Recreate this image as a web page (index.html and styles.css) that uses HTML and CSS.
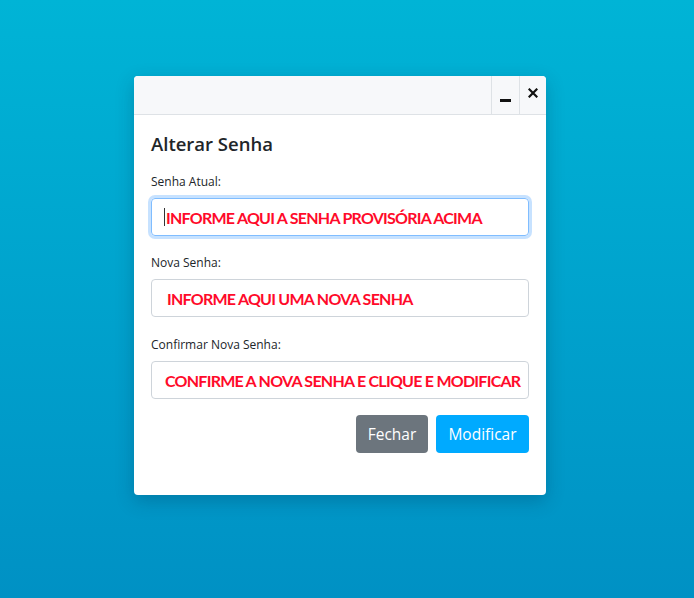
FILE: index.html
```html
<!DOCTYPE html>
<html lang="pt">
<head>
<meta charset="utf-8">
<link rel="stylesheet" href="styles.css">
</head>
<body>
<div class="dialog">
  <div class="dialog-header">
    <button class="hbtn" aria-label="minimizar"><span class="minbar"></span></button>
    <button class="hbtn close" aria-label="fechar">
      <svg width="10" height="10" viewBox="0 0 10 10"><path d="M1.5 1.5L8.5 8.5M8.5 1.5L1.5 8.5" stroke="#111" stroke-width="2.2" stroke-linecap="square"/></svg>
    </button>
  </div>
  <div class="dialog-body">
    <h2 class="title">Alterar Senha</h2>
    <div class="group">
      <label class="label">Senha Atual:</label>
      <div class="control focus"><span class="caret"></span><span class="hint">INFORME AQUI A SENHA PROVISÓRIA ACIMA</span></div>
    </div>
    <div class="group">
      <label class="label">Nova Senha:</label>
      <div class="control"><span class="hint pad2">INFORME AQUI UMA NOVA SENHA</span></div>
    </div>
    <div class="group last">
      <label class="label">Confirmar Nova Senha:</label>
      <div class="control"><span class="hint">CONFIRME A NOVA SENHA E CLIQUE E MODIFICAR</span></div>
    </div>
    <div class="actions">
      <button class="btn btn-gray">Fechar</button>
      <button class="btn btn-blue">Modificar</button>
    </div>
  </div>
</div>
</body>
</html>
```
FILE: styles.css
```css
html, body {
  margin: 0;
  height: 100%;
}
body {
  background: linear-gradient(180deg, #00b4d6 0%, #0091c4 100%);
  font-family: "Open Sans", "Noto Sans", sans-serif;
  color: #212529;
  padding-top: 76px;
  box-sizing: border-box;
  overflow: hidden;
}
.dialog {
  margin-left: 134px;
  width: 412px;
  height: 419px;
  background: #fff;
  border-radius: 4px;
  box-shadow: 0 6px 18px rgba(0, 40, 70, 0.25);
  overflow: hidden;
}
.dialog-header {
  height: 38px;
  background: #f7f8fa;
  border-bottom: 1px solid #dee2e6;
  display: flex;
  justify-content: flex-end;
}
.hbtn {
  width: 28px;
  height: 38px;
  border: none;
  border-left: 1px solid #dee2e6;
  background: transparent;
  padding: 0;
  display: flex;
  align-items: center;
  justify-content: center;
}
.hbtn.close {
  width: 27px;
  padding-bottom: 4px;
}
.minbar {
  display: block;
  width: 11px;
  height: 3px;
  background: #111;
  margin-top: 10px;
}
.dialog-body {
  padding: 15px 17px 0 17px;
}
.title {
  margin: 0 0 15px;
  font-size: 18.5px;
  font-weight: 600;
  line-height: 28px;
  color: #212529;
}
.group {
  margin-bottom: 18px;
}
.group.last {
  padding-top: 1px;
  margin-bottom: 16px;
}
.label {
  display: block;
  font-size: 12px;
  line-height: 18px;
  margin-bottom: 7px;
  color: #212529;
}
.control {
  box-sizing: border-box;
  height: 38px;
  border: 1px solid #ced4da;
  border-radius: 4px;
  display: flex;
  align-items: center;
  padding-left: 12px;
}
.control.focus {
  border-color: #80bdff;
  box-shadow: 0 0 0 3px rgba(0, 123, 255, 0.22);
}
.caret {
  width: 1px;
  height: 18px;
  background: #333;
}
.hint {
  color: #ff0a2a;
  font-family: "Lato", "Open Sans", sans-serif;
  font-weight: 700;
  font-size: 16px;
  letter-spacing: -0.75px;
  padding-left: 1px;
  padding-top: 1px;
  white-space: nowrap;
}
.hint.pad2 {
  padding-left: 3px;
}
.actions {
  display: flex;
  justify-content: flex-end;
  gap: 8px;
}
.btn {
  height: 38px;
  border: none;
  border-radius: 4px;
  color: #fff;
  font-family: "Open Sans", "Noto Sans", sans-serif;
  font-size: 15.5px;
  padding: 0 8px;
}
.btn-gray {
  background: #6c757d;
  width: 72px;
}
.btn-blue {
  background: #00aaff;
  width: 93px;
}
```
